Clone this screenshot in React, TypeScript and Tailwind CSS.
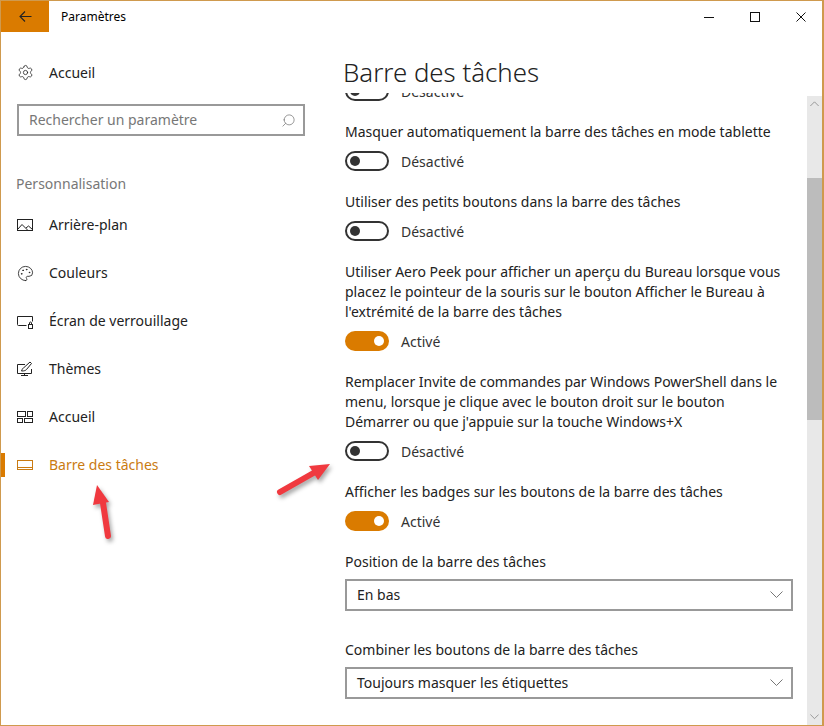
import { Search, Settings, Palette } from "lucide-react";

const navItems = [
  { label: "Arrière-plan", icon: "picture" },
  { label: "Couleurs", icon: "palette" },
  { label: "Écran de verrouillage", icon: "lock" },
  { label: "Thèmes", icon: "themes" },
  { label: "Accueil", icon: "start" },
  { label: "Barre des tâches", icon: "taskbar", active: true },
];

const Chevron = ({ size = 13, up = false }: { size?: number; up?: boolean }) => (
  <svg width={size} height={size / 2 + 1} viewBox="0 0 13 7.500" fill="none" stroke="#777" strokeWidth="1">
    <path d={up ? "M0.500 7L6.500 1l6 6" : "M0.500 0.500l6 6 6-6"} />
  </svg>
);

const NavIcon = ({ name }: { name: string }) => {
  if (name === "palette") return <Palette size={17} strokeWidth={1.200} />;
  return (
    <svg width="17" height="17" viewBox="0 0 17 17" fill="none" stroke="currentColor" strokeWidth="1">
      {name === "picture" && (
        <>
          <rect x="0.500" y="2.500" width="15" height="11" />
          <path d="M1 12l4-4.500 6 6M9 11l2.500-2 4 3.500" />
        </>
      )}
      {name === "lock" && (
        <>
          <path d="M9.500 12.500H1.500a1 1 0 0 1-1-1v-8h15v5" />
          <rect x="11.500" y="11.500" width="4" height="4" />
          <path d="M12.500 11.500V10a1 1 0 0 1 2 0v1.500" />
        </>
      )}
      {name === "themes" && (
        <>
          <path d="M8 3.500H0.500v9h14V8" />
          <path d="M7.500 12.500v2M4 14.500h7" />
          <path d="M4.500 10c1-2.500 1.500-3 2.500-3.500L13 1l1.500 1.500-5 6c-1 1-2 1.500-5 1.500z" />
        </>
      )}
      {name === "start" && (
        <>
          <rect x="0.500" y="2.500" width="8" height="5" />
          <rect x="10.500" y="2.500" width="5" height="5" />
          <rect x="0.500" y="9.500" width="5" height="4" />
          <rect x="7.500" y="9.500" width="8" height="4" />
        </>
      )}
      {name === "taskbar" && (
        <>
          <rect x="0.500" y="3.500" width="15" height="9" />
          <path d="M1 10.500h14" />
        </>
      )}
    </svg>
  );
};

const Toggle = ({ on }: { on?: boolean }) => (
  <div className="flex items-center h-5">
    {on ? (
      <div className="w-11 h-5 rounded-full bg-[#da7b00] flex items-center justify-end pr-[5px]">
        <div className="w-2.5 h-2.5 rounded-full bg-white" />
      </div>
    ) : (
      <div className="w-11 h-5 rounded-full border-2 border-[#333] flex items-center pl-[3px]">
        <div className="w-2.5 h-2.5 rounded-full bg-[#333]" />
      </div>
    )}
    <span className="ml-3 pt-0.5 text-[#333]">{on ? "Activé" : "Désactivé"}</span>
  </div>
);

const Setting = ({ lines, on }: { lines: string[]; on?: boolean }) => (
  <div className="mb-5">
    <div className="pt-px">
      {lines.map((l) => (
        <div key={l} className="text-[#222] whitespace-nowrap">
          {l}
        </div>
      ))}
    </div>
    <div className="mt-[9px]">
      <Toggle on={on} />
    </div>
  </div>
);

const Dropdown = ({ label, value }: { label: string; value: string }) => (
  <div className="mb-7">
    <div className="pt-px text-[#222]">{label}</div>
    <div className="mt-[7px] w-[448px] h-8 border-2 border-[#999] flex items-center justify-between pl-2.5 pr-2 text-[#222]">
      {value}
      <Chevron />
    </div>
  </div>
);

export default function App() {
  return (
    <div
      className="relative w-[824px] h-[726px] bg-white border border-r-2 border-[#cf9a4e] overflow-hidden text-sm leading-5"
      style={{ fontFamily: '"Noto Sans", sans-serif' }}
    >
      <div className="flex items-center h-[31px] text-black">
        <div className="w-12 h-full bg-[#da7b00] flex items-center justify-center">
          <svg width="13" height="11" viewBox="0 0 13 11" fill="none" stroke="#222" strokeWidth="1.100">
            <path d="M12.500 5.500H1M6 0.500L1 5.500l5 5" />
          </svg>
        </div>
        <span className="ml-3 text-xs">Paramètres</span>
        <div className="ml-auto flex items-center pr-4 gap-9">
          <svg width="10" height="10" viewBox="0 0 10 10" stroke="#111" fill="none"><path d="M0 5.500h10" /></svg>
          <svg width="10" height="10" viewBox="0 0 10 10" stroke="#111" fill="none"><rect x="0.500" y="0.500" width="9" height="9" /></svg>
          <svg width="10" height="10" viewBox="0 0 10 10" stroke="#111" fill="none"><path d="M0.500 0.500l9 9M9.500 0.500l-9 9" /></svg>
        </div>
      </div>

      <div className="flex h-[693px]">
        <div className="w-[328px] shrink-0">
          <div className="flex items-center pl-4 pt-[31px] h-[50px] text-[#222]">
            <Settings size={17} strokeWidth={1.100} />
            <span className="ml-[15px]">Accueil</span>
          </div>
          <div className="ml-[16px] mt-[22px] w-[288px] h-8 border-2 border-[#999] flex items-center justify-between pl-2.5 pr-[7px] text-[#777]">
            Rechercher un paramètre
            <Search size={15} strokeWidth={1.200} className="-scale-x-100 text-[#777]" />
          </div>
          <div className="ml-[15px] mt-[38px] text-[#777]">Personnalisation</div>
          <div className="mt-[7px]">
            {navItems.map((item) => (
              <div
                key={item.label + item.icon}
                className={`relative flex items-center h-12 pl-4 ${item.active ? "text-[#ca7b12]" : "text-[#222]"}`}
              >
                {item.active && <div className="absolute left-0 top-3 w-1 h-6 bg-[#da7b00]" />}
                <NavIcon name={item.icon} />
                <span className="ml-[15px]">{item.label}</span>
              </div>
            ))}
          </div>
        </div>

        <div className="flex-1 min-w-0 flex flex-col">
          <div className="pl-[14px] pt-[22px] h-[61px] text-[25.800px] font-light leading-[36px] text-[#222]">Barre des tâches</div>
          <div className="flex h-[632px]">
            <div className="flex-1 pl-4 overflow-hidden">
              <div className="-mt-3">
                <Toggle />
                <div className="h-5" />
                <Setting lines={["Masquer automatiquement la barre des tâches en mode tablette"]} />
                <Setting lines={["Utiliser des petits boutons dans la barre des tâches"]} />
                <Setting
                  on
                  lines={[
                    "Utiliser Aero Peek pour afficher un aperçu du Bureau lorsque vous",
                    "placez le pointeur de la souris sur le bouton Afficher le Bureau à",
                    "l'extrémité de la barre des tâches",
                  ]}
                />
                <Setting
                  lines={[
                    "Remplacer Invite de commandes par Windows PowerShell dans le",
                    "menu, lorsque je clique avec le bouton droit sur le bouton",
                    "Démarrer ou que j'appuie sur la touche Windows+X",
                  ]}
                />
                <Setting on lines={["Afficher les badges sur les boutons de la barre des tâches"]} />
                <Dropdown label="Position de la barre des tâches" value="En bas" />
                <Dropdown label="Combiner les boutons de la barre des tâches" value="Toujours masquer les étiquettes" />
              </div>
            </div>
            <div className="w-[15px] mt-[3px] bg-[#e8e8e8] flex flex-col items-center">
              <div className="h-4 flex items-center"><Chevron size={9} up /></div>
              <div className="self-stretch h-[242px] mt-[66px] bg-[#bcbcbc]" />
              <div className="mt-auto h-4 flex items-center"><Chevron size={9} /></div>
            </div>
          </div>
        </div>
      </div>

      {/* red annotation arrows */}
      <svg className="absolute -left-px -top-px pointer-events-none drop-shadow-[2px_3px_2px_rgba(0,0,0,0.35)]" width="824" height="726" fill="#f0393f">
        <path d="M108 536L103 503" stroke="#f0393f" strokeWidth="6" strokeLinecap="round" />
        <path d="M97 485L109 502 93 505z" />
        <path d="M280 492L317 471" stroke="#f0393f" strokeWidth="6" strokeLinecap="round" />
        <path d="M330 464L309 466 318 480z" />
      </svg>
    </div>
  );
}
